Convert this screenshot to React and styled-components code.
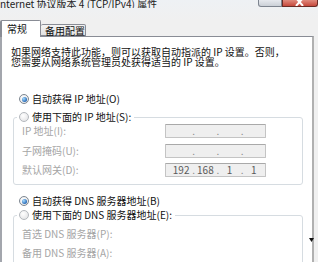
import React from 'react'
import styled, { createGlobalStyle } from 'styled-components'

const GlobalStyle = createGlobalStyle`
  html, body {
    margin: 0;
    padding: 0;
    background: #f0f0f0;
  }
`

const Window = styled.div`
  width: 318px;
  height: 262px;
  overflow: hidden;
  position: relative;
  display: flex;
  flex-direction: column;
  background: #f0f0f0;
  font-family: "Noto Sans CJK SC", "Liberation Sans", sans-serif;
  font-size: 10px;
  color: #111;
`

const TitleBar = styled.div`
  display: flex;
  align-items: flex-start;
  height: 20px;
  flex-shrink: 0;
  background: linear-gradient(#eef1f4, #f0f0f0);
`

const Title = styled.div`
  flex: 1;
  font-size: 10px;
  line-height: 8px;
  color: #1c1c1c;
  white-space: nowrap;
  overflow: hidden;
  text-indent: -3px;
`

const CaptionButton = styled.div`
  width: ${p => p.$w}px;
  height: 7px;
  box-sizing: border-box;
  border: 1px solid ${p => p.$close ? '#6a2b25' : '#7d848f'};
  border-top: none;
  border-radius: ${p => p.$close ? '0 0 3px 0' : '0 0 0 3px'};
  background: ${p => p.$close
    ? 'linear-gradient(#e08a7d, #c6493c)'
    : 'linear-gradient(#e6e9ee, #cbd0d7)'};
  display: flex;
  justify-content: center;
  overflow: hidden;
`

const TabStrip = styled.div`
  display: flex;
  align-items: flex-end;
  height: 16px;
  flex-shrink: 0;
`

const Tab = styled.div`
  position: relative;
  box-sizing: border-box;
  width: ${p => p.$active ? 41 : 45}px;
  height: ${p => p.$active ? 17 : 12}px;
  margin-bottom: ${p => p.$active ? -1 : 0}px;
  padding-left: ${p => p.$active ? 5 : 4}px;
  border: 1px solid #898c95;
  border-bottom: ${p => p.$active ? 'none' : '1px solid #898c95'};
  border-left-width: ${p => p.$active ? 2 : 0}px;
  border-radius: 2px 2px 0 0;
  background: ${p => p.$active ? '#fff' : 'linear-gradient(#f4f4f4, #e2e2e2)'};
  line-height: ${p => p.$active ? 16 : 11}px;
  white-space: nowrap;
  z-index: ${p => p.$active ? 1 : 0};
`

const Panel = styled.div`
  flex: 1;
  margin-right: 4px;
  padding: 10px 9px 0 9px;
  background: #fff;
  border: 1px solid #898c95;
  border-left: 2px solid #a3a6ad;
  border-right: 2px solid #b0b0b0;
  display: flex;
  flex-direction: column;
`

const Desc = styled.p`
  margin: 0;
  line-height: 10px;
  white-space: nowrap;
`

const RadioRow = styled.label`
  display: flex;
  align-items: center;
  gap: 3px;
  height: 12px;
  line-height: 12px;
  white-space: nowrap;
  padding-left: ${p => p.$legend ? 0 : 8}px;
  margin-top: ${p => p.$mt || 0}px;
`

const Radio = styled.span`
  width: 10px;
  height: 10px;
  box-sizing: border-box;
  border-radius: 50%;
  border: 1px solid ${p => p.$on ? '#7d8690' : '#b4b8bd'};
  background: radial-gradient(circle at 40% 35%, #ffffff, #dedfe1);
  display: flex;
  align-items: center;
  justify-content: center;
  flex-shrink: 0;

  &::after {
    content: '';
    width: 5px;
    height: 5px;
    border-radius: 50%;
    background: ${p => p.$on
      ? 'radial-gradient(circle at 35% 35%, #a6dcff, #2a6cb8 70%, #1a4a8a)'
      : 'transparent'};
  }
`

const Group = styled.fieldset`
  margin: ${p => p.$mt}px 0 0 2px;
  padding: 0;
  border: 1px solid #d6dce1;
  border-radius: 3px;
  min-width: 0;
`

const Legend = styled.legend`
  margin-left: 3px;
  padding: 0 3px 0 2px;
`

const Rows = styled.div`
  display: flex;
  flex-direction: column;
  gap: ${p => p.$gap}px;
  padding: ${p => p.$pt}px 0 7px 8px;
`

const FieldRow = styled.div`
  display: grid;
  grid-template-columns: 143px 101px;
  align-items: center;
  height: 14px;
`

const FieldLabel = styled.span`
  color: #a5a5a5;
  white-space: nowrap;
  line-height: 14px;
`

const IpBox = styled.div`
  box-sizing: border-box;
  height: 14px;
  display: flex;
  align-items: center;
  padding-left: 4px;
  border: 1px solid #c4c4c4;
  border-top-color: #a9a9a9;
  border-radius: 1px;
  background: #efefef;
  color: #5a5a5a;
  line-height: 12px;
`

const Octet = styled.span`
  flex: 1;
  text-align: center;
`

const Dot = styled.span`
  width: 2px;
  text-align: center;
  color: #8a8a8a;
`

const Cursor = styled.svg`
  position: absolute;
  left: 309px;
  top: 238px;
`

const IpInput = ({ value = ['', '', '', ''] }) => (
  <IpBox>
    {value.map((v, i) => (
      <React.Fragment key={i}>
        <Octet>{v}</Octet>
        {i < 3 && <Dot>.</Dot>}
      </React.Fragment>
    ))}
  </IpBox>
)

const App = () => {
  return (
    <Window>
      <GlobalStyle />
      <TitleBar>
        <Title>Internet 协议版本 4 (TCP/IPv4) 属性</Title>
        <CaptionButton $w={24} />
        <CaptionButton $w={36} $close>
          <svg width="10" height="6" viewBox="0 0 10 6">
            <path d="M1 6 L8 -2 M1 -2 L8 6" stroke="#fff" strokeWidth="2" />
          </svg>
        </CaptionButton>
      </TitleBar>
      <TabStrip>
        <Tab $active>常规</Tab>
        <Tab>备用配置</Tab>
      </TabStrip>
      <Panel>
        <Desc>
          如果网络支持此功能，则可以获取自动指派的 IP 设置。否则，<br />
          您需要从网络系统管理员处获得适当的 IP 设置。
        </Desc>
        <RadioRow $mt={26}>
          <Radio $on />
          自动获得 IP 地址(O)
        </RadioRow>
        <Group $mt={6}>
          <Legend>
            <RadioRow $legend>
              <Radio />
              使用下面的 IP 地址(S):
            </RadioRow>
          </Legend>
          <Rows $pt={1} $gap={5.5}>
            <FieldRow>
              <FieldLabel>IP 地址(I):</FieldLabel>
              <IpInput />
            </FieldRow>
            <FieldRow>
              <FieldLabel>子网掩码(U):</FieldLabel>
              <IpInput />
            </FieldRow>
            <FieldRow>
              <FieldLabel>默认网关(D):</FieldLabel>
              <IpInput value={['192', '168', '1', '1']} />
            </FieldRow>
          </Rows>
        </Group>
        <RadioRow $mt={10}>
          <Radio $on />
          自动获得 DNS 服务器地址(B)
        </RadioRow>
        <Group $mt={2}>
          <Legend>
            <RadioRow $legend>
              <Radio />
              使用下面的 DNS 服务器地址(E):
            </RadioRow>
          </Legend>
          <Rows $pt={6} $gap={5}>
            <FieldRow>
              <FieldLabel>首选 DNS 服务器(P):</FieldLabel>
            </FieldRow>
            <FieldRow>
              <FieldLabel>备用 DNS 服务器(A):</FieldLabel>
            </FieldRow>
          </Rows>
        </Group>
      </Panel>
      <Cursor width="5" height="5" viewBox="0 0 5 5">
        <path d="M0 0 L5 0 L2.5 4 Z" fill="#111" />
      </Cursor>
    </Window>
  )
}

export default App
